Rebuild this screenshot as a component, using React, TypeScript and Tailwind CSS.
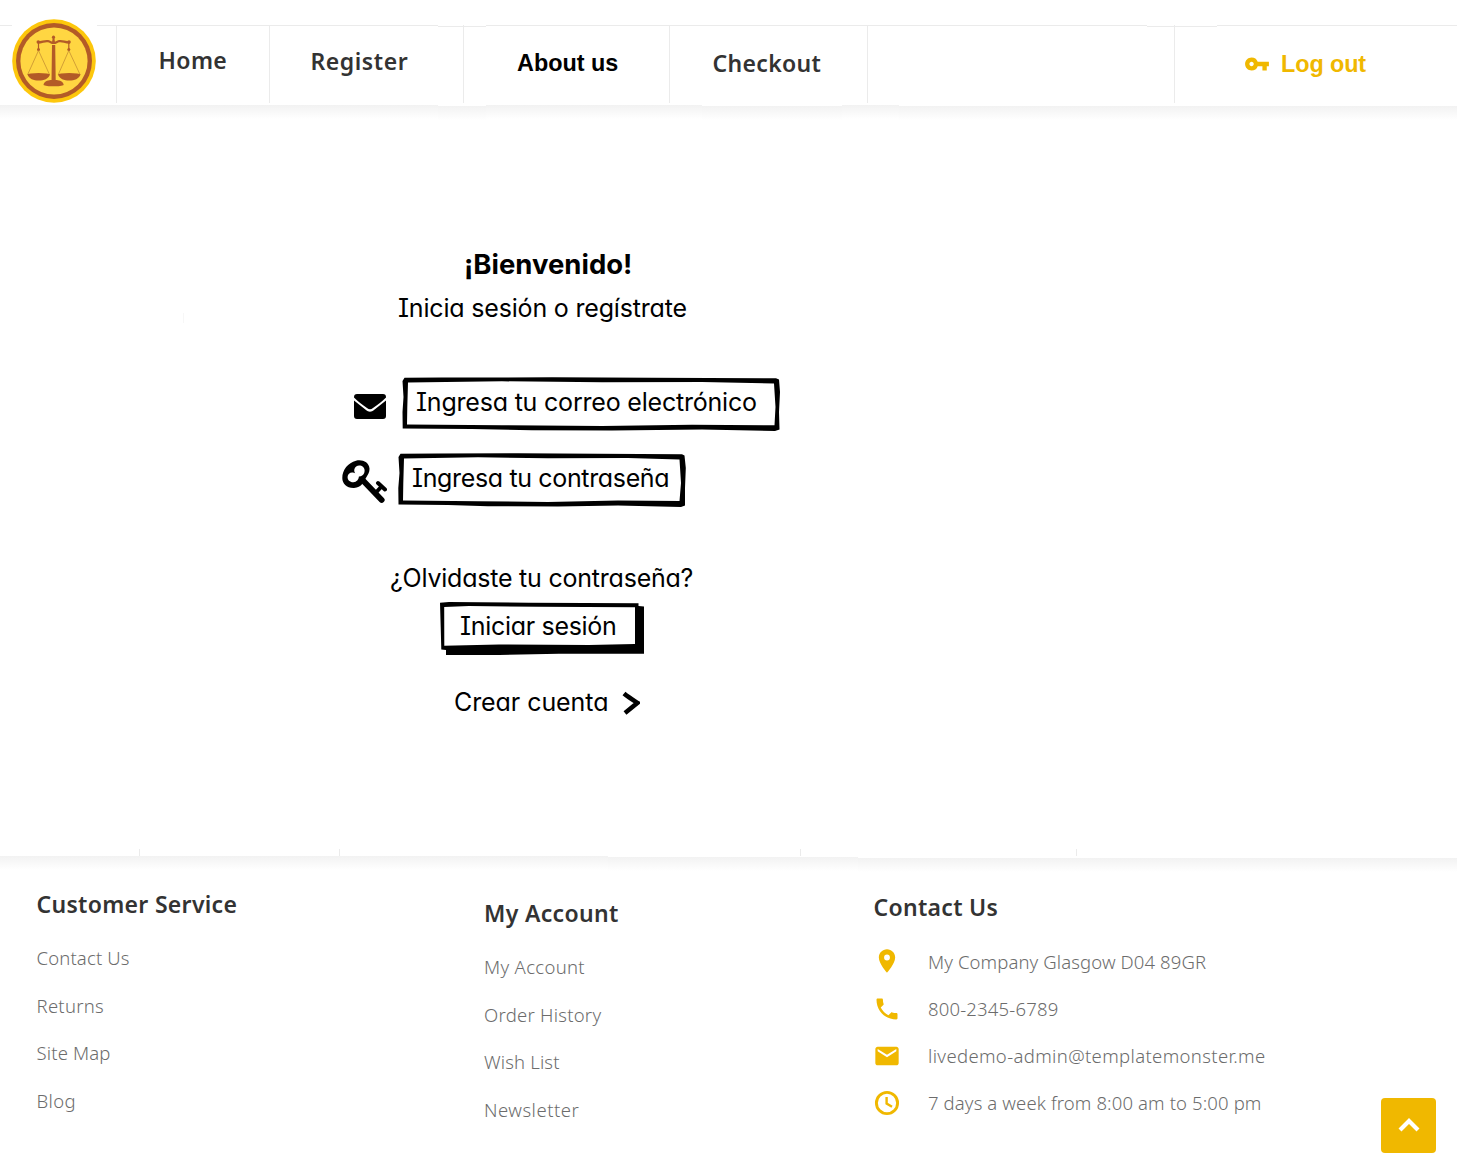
import type { ReactNode } from 'react';
import { MdEmail, MdLocationOn, MdPhone, MdVpnKey } from 'react-icons/md';

const UI = "font-['Noto_Sans',sans-serif]";
const ARIAL = "font-['Liberation_Sans',sans-serif] text-[23.4px] font-bold whitespace-nowrap";
const SKETCH = "font-['Inter',sans-serif] text-[25px] leading-8 text-black whitespace-nowrap [font-feature-settings:'cv08','cv11']";

function Logo() {
  return (
    <svg viewBox="0 0 84 84" className="h-[84px] w-[84px] shrink-0">
      <circle cx="42" cy="42" r="41.8" fill="#fdc70c" />
      <circle cx="42" cy="42" r="38" fill="#b35b27" />
      <circle cx="42" cy="42" r="33.6" fill="#ffd642" />
      <g fill="#b35b27">
        <circle cx="41.5" cy="18.2" r="1.6" />
        <path d="M40.9 18h1.3l.8 5.2h-3zM40 26h3.2l.5 36h-4.2z" />
        <path d="M15.5 55.5h22.5c-1.5 4.4-6 6-11.2 6s-9.8-1.6-11.3-6zM46 55.5h22.5c-1.5 4.4-6 6-11.2 6s-9.8-1.6-11.3-6z" />
        <ellipse cx="26.7" cy="55.5" rx="11.3" ry="1.5" />
        <ellipse cx="57.2" cy="55.5" rx="11.3" ry="1.5" />
        <path d="M31.5 66c.4-3.8 4-4.5 7-5h6.2c3 .5 6.6 1.2 7 5-2 1.8-18.2 1.8-20.2 0z" />
        <circle cx="26.3" cy="23.1" r="1.8" />
        <circle cx="57" cy="23.1" r="1.8" />
        <circle cx="26.5" cy="30.5" r="1.5" />
        <circle cx="56.8" cy="30.5" r="1.5" />
      </g>
      <path d="M26 23.5c4.5 0 6.5-2 10-1.3 3 .6 3 1.7 5.6 1.7s2.7-1.1 5.6-1.7c3.5-.7 5.5 1.3 10 1.3" fill="none" stroke="#b35b27" strokeWidth="2.2" />
      <path d="M26.5 23.5v8M56.8 23.5v8" stroke="#b35b27" strokeWidth="1.2" />
      <path d="M26.5 31.5L15.7 55.5M26.5 31.5L37.5 55.5M56.8 31.5L46.3 55.5M56.8 31.5L68 55.5" stroke="#b9802f" strokeWidth="0.65" />
    </svg>
  );
}

function NavCell({ className, children }: { className: string; children?: ReactNode }) {
  return <div className={`h-[78px] shrink-0 border-r border-[#ebebeb] ${className}`}>{children}</div>;
}

function Shade({ className }: { className: string }) {
  return <div className={`h-[14px] bg-linear-to-b from-[#f2f2f2] to-white ${className}`} />;
}

function Header() {
  return (
    <header className="h-[105px] pt-[25px]">
      <div className="flex h-0">
        <div className="h-px w-3 bg-[#ebebeb]" />
        <div className="ml-[85px] h-px w-[341px] bg-[#ebebeb]" />
        <div className="mt-px h-px w-[48px] bg-[#ebebeb]" />
        <div className="h-px w-[661px] bg-[#ebebeb]" />
        <div className="mt-px h-px w-[70px] bg-[#ebebeb]" />
        <div className="h-px flex-1 bg-[#ebebeb]" />
      </div>
      <nav className={`flex ${UI} text-[23px] leading-8 font-semibold text-[#333]`}>
        <NavCell className="w-[117px]">
          <div className="-mt-[5.6px] ml-[12.4px]"><Logo /></div>
        </NavCell>
        <NavCell className="w-[153px] pt-[19px] pl-[41.5px] tracking-[0.4px]">Home</NavCell>
        <NavCell className="w-[194px] pt-[20px] pl-[40.5px] tracking-[0.55px]">Register</NavCell>
        <NavCell className="w-[206px] pt-[21px] pl-[53px]">
          <span className={`${ARIAL} text-black`}>About us</span>
        </NavCell>
        <NavCell className="w-[198px] pt-[22px] pl-[42.5px] tracking-[0.32px]">Checkout</NavCell>
        <NavCell className="w-[307px]" />
        <div className="flex items-start pt-[22px] pl-[69px] text-[#f0b800]">
          <MdVpnKey className="mt-[4px] size-[26px]" />
          <span className={`mt-px ml-[11px] tracking-[-0.1px] ${ARIAL}`}>Log out</span>
        </div>
      </nav>
    </header>
  );
}

function EnvelopeGlyph() {
  return (
    <svg viewBox="0 0 32 25" className="mt-[17px] h-[25px] w-8">
      <path d="M3 0h26a3 3 0 0 1 3 3v.5c-4 4-9 7.5-13 10.5-2 1.6-4 1.6-6 0C9 11 4 7.5 0 3.500V3a3 3 0 0 1 3-3z" />
      <path d="M0 6.500C4 9.800 8 13 12 16c2.500 2.200 5.500 2.200 8 0 4-3 8-6.200 12-9.500V22a3 3 0 0 1-3 3H3a3 3 0 0 1-3-3z" />
    </svg>
  );
}

function KeyGlyph() {
  return (
    <svg viewBox="0 0 45 44" className="mt-[7px] h-[44px] w-[45px]">
      <path d="M14 .8C20 -.8 27 2 27.500 8.500c.2 3.500-1.300 6-3 8.500L20 24.300c-2 2-4 3.500-8 3.700C4.500 28.200.3 23.500.3 18 .3 10 6 2.800 14 .8z" />
      <path d="M21 20.500L39.700 40" stroke="#000" strokeWidth="5.800" strokeLinecap="round" />
      <path d="M34 32.500L39.500 26.500M36 23L43 29.500" stroke="#000" strokeWidth="4" strokeLinecap="round" />
      <path fill="#fff" d="M12.300 9.500C13 6 16.500 4.800 19.200 5.800c3 1.100 4.200 4.200 3 7.200-.9 2.300-3 3.600-5.300 3.500-.2 3-2.200 5.500-5.500 5.700-3.500.1-6-2.200-5.800-5.500.2-2.800 2.600-4.700 5.400-4.200l2.200.8c-.8-1-1.100-2.400-.9-3.800z" />
    </svg>
  );
}

function ClockGlyph({ className }: { className?: string }) {
  return (
    <svg viewBox="0 0 28 28" fill="none" stroke="currentColor" className={className}>
      <circle cx="14" cy="14" r="10.6" strokeWidth="2.9" />
      <path d="M13.6 8v6.500l5.400 3.300" strokeWidth="2.4" />
    </svg>
  );
}

function WelcomeForm() {
  return (
    <main className="relative flex h-[744px] flex-col items-start pt-[144px]">
      <div className="absolute top-[208px] left-[183px] h-[10px] w-px bg-[#f7f7f7]" />
      <h1 className={`${SKETCH} -mt-px ml-[464px] !text-[27.5px] font-bold`}>¡Bienvenido!</h1>
      <p className={`${SKETCH} mt-3 ml-[398px] tracking-[-0.18px]`}>Inicia sesión o regístrate</p>

      <div className="mt-[53px] ml-[354px] flex h-[54px] items-start">
        <EnvelopeGlyph />
        <div className="relative ml-4 h-[54px] w-[378px] pt-[9px] pl-[14px]">
          <svg viewBox="0 0 378 54" className="absolute inset-0 h-[54px] w-[378px]">
            <path fillRule="evenodd" d="M2.500 .8L40 .5 150 .3 250 .7 374 1.200 377 2.500 378 15 377 35 377.500 52.500 373 54 300 52.500 210 53.500 130 53.300 70 52 .7 51.500 .5 35 1.500 20 .5 4zM6 5.500L5.300 30 5 47.500 100 48.300 200 49 290 47.800 372.500 48.300 373.500 30 372 6.500 300 5 200 5.300 100 4.300z" />
          </svg>
          <span className={`${SKETCH} relative tracking-[-0.2px]`}>Ingresa tu correo electrónico</span>
        </div>
      </div>

      <div className="mt-[22px] ml-[342px] flex h-[54px] items-start">
        <KeyGlyph />
        <div className="relative ml-[11px] h-[54px] w-[288px] pt-[9px] pl-[14px]">
          <svg viewBox="0 0 288 54" className="absolute inset-0 h-[54px] w-[288px]">
            <path fillRule="evenodd" d="M2.500 .8L40 .5 120 .2 200 .7 284 1.200 286.500 2.500 287.800 15 287 35 287 52.500 283 54 220 52.500 160 53.500 90 53.300 50 52 .5 51.500 .3 35 1.500 20 .5 4zM6 5.500L5.300 30 5 47.500 80 48.300 150 49 220 47.500 281.500 48 283 30 281.500 6.500 230 5 150 5.300 80 4.300z" />
          </svg>
          <span className={`${SKETCH} relative tracking-[-0.35px]`}>Ingresa tu contraseña</span>
        </div>
      </div>

      <p className={`${SKETCH} mt-[55px] ml-[390px] tracking-[-0.22px]`}>¿Olvidaste tu contraseña?</p>

      <button className="relative mt-2 ml-[439px] h-[54px] w-[206px] pl-[21px] text-left">
        <svg viewBox="0 0 206 54" className="absolute inset-0 h-[54px] w-[206px]">
          <path fillRule="evenodd" d="M1 .8L10 0 90 .8 199.500 1.200V4l5.500.5V51.800L120 51.800 60 53 7 53V48L2.300 47.500 1.700 25zM5.200 5L5.300 43.700 60 42.500 150 43 196 42V5.200L100 4.800 30 4z" />
        </svg>
        <span className={`${SKETCH} relative -top-[3px] tracking-[-0.3px]`}>Iniciar sesión</span>
      </button>

      <div className="mt-[30px] ml-[454px] flex items-center">
        <span className={`${SKETCH} tracking-[-0.07px]`}>Crear cuenta</span>
        <svg viewBox="0 0 18 24" className="mt-[2px] ml-[14px] h-6 w-[18px]">
          <path d="M2 2.500C6 6 11 9 15.500 11.800L3 22" fill="none" stroke="#000" strokeWidth="4.5" />
        </svg>
      </div>
    </main>
  );
}

const HEADING = `${UI} text-[23px] leading-8 font-semibold text-[#333] whitespace-nowrap`;
const ITEM = `${UI} flex h-[47.5px] items-center text-[18.5px] font-light text-[#6c6c6c] whitespace-nowrap`;

function LinkColumn({ title, titleClass, links, className }: { title: string; titleClass: string; links: { label: string; track: string }[]; className: string }) {
  return (
    <section className={className}>
      <h2 className={`${HEADING} ${titleClass}`}>{title}</h2>
      <ul className="mt-[14.4px]">
        {links.map((l) => (
          <li key={l.label} className={`${ITEM} ${l.track}`}>{l.label}</li>
        ))}
      </ul>
    </section>
  );
}

const service = [
  { label: 'Contact Us', track: 'tracking-[0.15px]' },
  { label: 'Returns', track: 'tracking-[0.28px]' },
  { label: 'Site Map', track: 'tracking-[0.15px]' },
  { label: 'Blog', track: 'tracking-[0.4px]' },
];
const account = [
  { label: 'My Account', track: 'tracking-[0.32px]' },
  { label: 'Order History', track: 'tracking-[0.25px]' },
  { label: 'Wish List', track: 'tracking-[0.15px]' },
  { label: 'Newsletter', track: 'tracking-[0.5px]' },
];
const contact = [
  { Icon: MdLocationOn, label: 'My Company Glasgow D04 89GR', track: 'tracking-[0.11px]', icon: '-mt-[2px]' },
  { Icon: MdPhone, label: '800-2345-6789', track: 'tracking-[0.18px]', icon: 'mt-0' },
  { Icon: MdEmail, label: 'livedemo-admin@templatemonster.me', track: 'tracking-[0.36px]', icon: 'mt-0' },
  { Icon: ClockGlyph, label: '7 days a week from 8:00 am to 5:00 pm', track: 'tracking-[0.12px]', icon: 'mt-0' },
];

function Footer() {
  return (
    <footer className="relative h-[318px]">
      <div className="flex h-[7px]">
        <div className="w-[140px] border-r border-[#ebebeb]" />
        <div className="w-[200px] border-r border-[#ebebeb]" />
        <div className="w-[461px] border-r border-[#ebebeb]" />
        <div className="w-[276px] border-r border-[#ebebeb]" />
      </div>
      <div className="flex h-4 items-start">
        <Shade className="w-[608px]" />
        <Shade className="mt-px w-[250px]" />
        <Shade className="mt-0.5 flex-1" />
      </div>
      <div className="flex items-start">
        <LinkColumn title="Customer Service" titleClass="tracking-[0.3px]" links={service} className="mt-4 w-[448px] pl-[36.5px]" />
        <LinkColumn title="My Account" titleClass="tracking-[0.32px]" links={account} className="mt-[25px] w-[389px] pl-9" />
        <section className="mt-[19px] pl-9">
          <h2 className={`${HEADING} ml-[0.5px] tracking-[0.3px]`}>Contact Us</h2>
          <ul className="mt-[15px]">
            {contact.map(({ Icon, label, track, icon }) => (
              <li key={label} className={`${ITEM} !h-[47px] ${track}`}>
                <Icon className={`size-[28px] text-[#f0b800] ${icon}`} />
                <span className="ml-[27px]">{label}</span>
              </li>
            ))}
          </ul>
        </section>
      </div>
      <button className="absolute top-[249px] right-[21px] flex h-[55px] w-[55px] items-center justify-center rounded-[4px] bg-[#f0b800]">
        <svg viewBox="0 0 22 14" className="mb-px h-[14px] w-[22px]">
          <path d="M2 12L11 3l9 9" fill="none" stroke="#fff" strokeWidth="4.2" />
        </svg>
      </button>
    </footer>
  );
}

export default function App() {
  return (
    <div className="h-[1167px] w-[1457px] overflow-hidden bg-white">
      <Header />
      <div className="flex h-0 items-start">
        <Shade className="w-[438px]" />
        <Shade className="mt-px w-[48px]" />
        <Shade className="w-[216px]" />
        <Shade className="mt-px w-[140px]" />
        <Shade className="w-[57px]" />
        <Shade className="mt-px flex-1" />
      </div>
      <WelcomeForm />
      <Footer />
    </div>
  );
}
